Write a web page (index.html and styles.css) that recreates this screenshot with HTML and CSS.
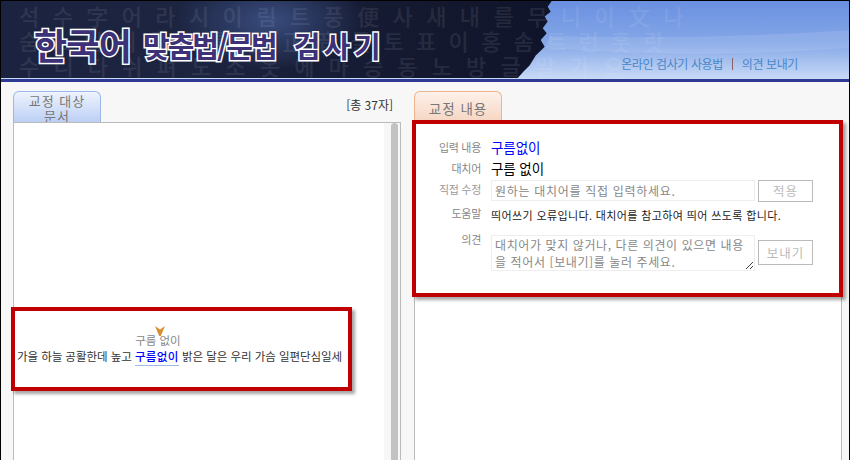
FILE: index.html
```html
<!DOCTYPE html>
<html lang="ko">
<head>
<meta charset="utf-8">
<title>한국어 맞춤법/문법 검사기</title>
<link rel="stylesheet" href="styles.css">
</head>
<body>
<div class="page">
  <header class="header">
    <svg class="blot" viewBox="0 0 850 80" preserveAspectRatio="none" aria-hidden="true">
      <defs>
        <radialGradient id="glow" cx="50%" cy="50%" r="50%">
          <stop offset="0" stop-color="#41578f" stop-opacity=".8"/>
          <stop offset="1" stop-color="#41578f" stop-opacity="0"/>
        </radialGradient>
        <linearGradient id="sky" x1="0" y1="0" x2="0" y2="1">
          <stop offset="0" stop-color="#6a90e0"/>
          <stop offset=".55" stop-color="#86a8e8"/>
          <stop offset="1" stop-color="#c8daf6"/>
        </linearGradient>
        <linearGradient id="ink" x1="0" y1="0" x2="1" y2="0">
          <stop offset="0" stop-color="#1c2340"/>
          <stop offset=".35" stop-color="#1c2440"/>
          <stop offset=".75" stop-color="#141930"/>
          <stop offset="1" stop-color="#10142a"/>
        </linearGradient>
      </defs>
      <rect width="850" height="80" fill="url(#sky)"/>
      <path d="M0 0H552L548 6L551 11L545 16L548 21L543 28L547 33L541 40L545 47L536 56L530 66L524 72L518 79H0Z" fill="url(#ink)"/>
      <ellipse cx="270" cy="20" rx="95" ry="50" fill="url(#glow)"/>
      <path d="M550 36Q700 40 850 30V48Q700 60 545 48Z" fill="#fff" opacity=".1"/>
    </svg>
    <div class="glyphs" aria-hidden="true">
      <div class="glyph-row"><span>석</span><span>수</span><span>字</span><span>어</span><span>라</span><span>시</span><span>이</span><span>림</span><span>트</span><span>풍</span><span>便</span><span>사</span><span>새</span><span>내</span><span>를</span><span>무</span><span>니</span><span>이</span><span>文</span><span>나</span></div>
      <div class="glyph-row glyph-low"><span>숨</span><span>소</span><span>말</span><span>의</span><span>글</span><span>자</span><span>訓</span><span>民</span><span>正</span><span>音</span><span>몰</span><span>토</span><span>표</span><span>이</span><span>홍</span><span>솜</span><span>트</span><span>런</span><span>훗</span><span>랏</span></div>
      <div class="glyph-row glyph-last"><span>수</span><span>니</span><span>다</span><span>쉬</span><span>펴</span><span>도</span><span>소</span><span>옷</span><span>에</span><span>마</span><span>승</span><span>동</span><span>노</span><span>방</span><span>글</span><span>말</span><span>가</span><span>으</span></div>
    </div>
    <h1 class="title"><span class="title-big">한국어</span><span class="title-small title-mid">맞춤법/문법</span><span class="title-small title-last">검사기</span></h1>
    <nav class="links"><a>온라인 검사기 사용법</a><i class="sep"></i><a>의견 보내기</a></nav>
  </header>
  <main class="content">
    <section class="left">
      <div class="left-top">
        <div class="tab tab-blue">교정 대상<br>문서</div>
        <div class="count">[총 37자]</div>
      </div>
      <div class="left-box">
        <div class="doc">
          <div class="doc-text">가을 하늘 공활한데 높고 <span class="word"><span class="hint">구름 없이<svg class="arrow" viewBox="0 0 10 10" aria-hidden="true"><path d="M0 0L5 3.5L10 0L5.8 10H4.2Z" fill="#d98f2e"/></svg></span><span class="orig">구름없이</span></span> 밝은 달은 우리 가슴 일편단심일세</div>
        </div>
        <div class="scroll"><div class="thumb"></div></div>
      </div>
    </section>
    <section class="right">
      <div class="tab tab-orange">교정 내용</div>
      <div class="right-box">
        <div class="row row-input"><span class="label">입력 내용</span><span class="val val-blue">구름없이</span></div>
        <div class="row row-sub"><span class="label">대치어</span><span class="val">구름 없이</span></div>
        <div class="row row-edit"><span class="label label-edit">직접 수정</span><div class="field">원하는 대치어를 직접 입력하세요.</div><div class="btn btn-apply">적용</div></div>
        <div class="row row-help"><span class="label">도움말</span><span class="help">띄어쓰기 오류입니다. 대치어를 참고하여 띄어 쓰도록 합니다.</span></div>
        <div class="row row-opinion"><span class="label">의견</span><div class="area">대치어가 맞지 않거나, 다른 의견이 있으면 내용을 적어서 [보내기]를 눌러 주세요.<svg class="grip" viewBox="0 0 9 9" aria-hidden="true"><path d="M1 8L8 1M5 8L8 5" stroke="#444" stroke-width="1"/></svg></div><div class="btn btn-send">보내기</div></div>
      </div>
    </section>
  </main>
  <div class="callout callout-left"></div>
  <div class="callout callout-right"></div>
</div>
</body>
</html>
```

FILE: styles.css
```css
* { box-sizing: border-box; }
html, body { margin: 0; padding: 0; }
body {
  width: 850px;
  height: 460px;
  overflow: hidden;
  font-family: "Noto Sans CJK KR", "Liberation Sans", sans-serif;
  background: #f7f7f7;
}
.page {
  position: relative;
  width: 850px;
  height: 460px;
  border: 1px solid #000;
  border-bottom: 0;
  overflow: hidden;
}
.header {
  position: relative;
  height: 81px;
  border-bottom: 3px solid #2f3b92;
  overflow: hidden;
}
.blot {
  position: absolute;
  left: 0;
  top: 0;
  width: 848px;
  height: 78px;
}
.glyphs {
  position: absolute;
  left: 0;
  top: 0;
  width: 848px;
  height: 78px;
  padding-top: 2px;
  color: #fff;
  opacity: .08;
  font-weight: 500;
  font-size: 22px;
  line-height: 25px;
}
.glyph-row {
  display: flex;
  justify-content: space-between;
  padding: 0 165px 0 18px;
  white-space: nowrap;
  height: 25px;
}
.glyph-low { padding-right: 185px; }
.glyph-last { padding-right: 225px; }
.title {
  position: absolute;
  left: 33px;
  top: 23px;
  margin: 0;
  display: flex;
  align-items: flex-end;
  color: #3d3278;
  font-weight: 700;
  line-height: 40px;
  white-space: nowrap;
  -webkit-text-stroke: 3px #fff;
  paint-order: stroke fill;
}
.title-big { font-size: 36px; letter-spacing: -.8px; }
.title-small { font-size: 29px; line-height: 38px; }
.title-mid { margin-left: 12px; letter-spacing: -2px; }
.title-last { margin-left: 18px; letter-spacing: 3.5px; }
.links {
  position: absolute;
  right: 51px;
  top: 55px;
  display: flex;
  align-items: center;
  gap: 9px;
  font-size: 12px;
  line-height: 16px;
  letter-spacing: -.4px;
  color: #4a86c8;
}
.sep { width: 1px; height: 12px; background: #8a6060; }
.content {
  display: flex;
  height: 378px;
}
.left {
  width: 400px;
  padding: 9px 0 0 12px;
  flex: none;
}
.left-top {
  display: flex;
  justify-content: space-between;
  height: 31px;
}
.tab {
  border: 1px solid;
  border-bottom: 0;
  border-radius: 6px 6px 0 0;
  color: #777;
  text-align: center;
  letter-spacing: 1px;
  overflow: hidden;
}
.tab-blue {
  width: 88px;
  height: 31px;
  font-size: 13px;
  line-height: 15px;
  padding-top: 1px;
  border-color: #9cb8ea;
  background: linear-gradient(#eef3fd, #bcd0f5);
}
.count {
  margin: 6px 8px 0 0;
  font-size: 12px;
  line-height: 16px;
  color: #333;
}
.left-box {
  display: flex;
  height: 341px;
  width: 388px;
  border: 1px solid #bbb;
  border-bottom: 0;
  background: #fff;
}
.doc {
  flex: 1;
  padding: 221px 39px 0 0;
  text-align: center;
}
.doc-text {
  font-size: 11.5px;
  line-height: 24px;
  letter-spacing: -.05px;
  color: #333;
  white-space: nowrap;
}
.word {
  position: relative;
  display: inline-block;
  border-bottom: 1px solid #9cb8ea;
  line-height: 18px;
}
.orig { color: #00f; font-weight: 500; letter-spacing: .4px; }
.hint {
  position: absolute;
  left: 0;
  right: -2px;
  top: -15px;
  line-height: 16px;
  color: #888;
  text-align: center;
}
.arrow {
  position: absolute;
  left: 20px;
  top: -6px;
  width: 10px;
  height: 10px;
}
.scroll {
  width: 16px;
  flex: none;
  background: #f7f7f7;
  padding-left: 7px;
}
.thumb {
  width: 7px;
  height: 100%;
  background: #c2c2c2;
  border-radius: 4px 4px 0 0;
}
.right {
  width: 430px;
  margin-left: 13px;
  padding-top: 9px;
  flex: none;
}
.tab-orange {
  width: 88px;
  height: 31px;
  font-size: 13.5px;
  line-height: 30px;
  padding-top: 1px;
  border-color: #eeb48e;
  background: linear-gradient(#fdf1ea, #f6d5c2);
}
.right-box {
  width: 428px;
  height: 341px;
  border: 1px solid #bbb;
  border-bottom: 0;
  background: #fff;
  padding: 14px 0 0 0;
}
.row { display: flex; align-items: flex-start; }
.label {
  width: 66px;
  flex: none;
  text-align: right;
  font-size: 11px;
  line-height: 16px;
  letter-spacing: -.3px;
  color: #888;
}
.val {
  margin-left: 10px;
  font-size: 13.5px;
  line-height: 20px;
  color: #000;
  letter-spacing: -.1px;
}
.val-blue { color: #00f; }
.row-input { height: 21px; }
.row-sub { height: 22px; }
.label-edit { color: #999; margin-top: 1px; }
.row-edit { height: 34px; }
.row-input .label, .row-sub .label { margin-top: 2px; }
.field {
  margin-left: 10px;
  width: 264px;
  height: 21px;
  border: 1px solid #eee;
  padding-left: 3px;
  font-size: 12px;
  line-height: 20px;
  letter-spacing: .7px;
  color: #888;
  white-space: nowrap;
}
.btn {
  margin-left: 3px;
  width: 55px;
  border: 1px solid #bbb;
  background: #fff;
  color: #bbb;
  text-align: center;
  font-size: 12.5px;
  letter-spacing: 1px;
}
.btn-apply { height: 22px; line-height: 20px; }
.row-help { height: 21px; margin-top: -8px; }
.row-help .label { margin-top: -1px; }
.help {
  margin-left: 10px;
  margin-top: 1px;
  font-size: 11px;
  line-height: 16px;
  letter-spacing: .38px;
  color: #222;
  white-space: nowrap;
}
.row-opinion { margin-top: 8px; }
.row-opinion .label { margin-top: -4px; }
.area {
  position: relative;
  margin-left: 10px;
  width: 264px;
  height: 36px;
  border: 1px solid #eee;
  padding: 1px 2px 0 3px;
  font-size: 12px;
  line-height: 16.5px;
  letter-spacing: .6px;
  word-break: break-all;
  color: #888;
  overflow: hidden;
}
.grip {
  position: absolute;
  right: 0;
  bottom: 0;
  width: 9px;
  height: 9px;
}
.btn-send { height: 25px; line-height: 23px; margin-top: 5px; }
.callout {
  position: absolute;
  border: 4px solid #c00000;
  box-shadow: 3px 3px 3px rgba(0, 0, 0, .35);
}
.callout-left { left: 10px; top: 306px; width: 341px; height: 84px; }
.callout-right { left: 411px; top: 119px; width: 431px; height: 177px; }
```
